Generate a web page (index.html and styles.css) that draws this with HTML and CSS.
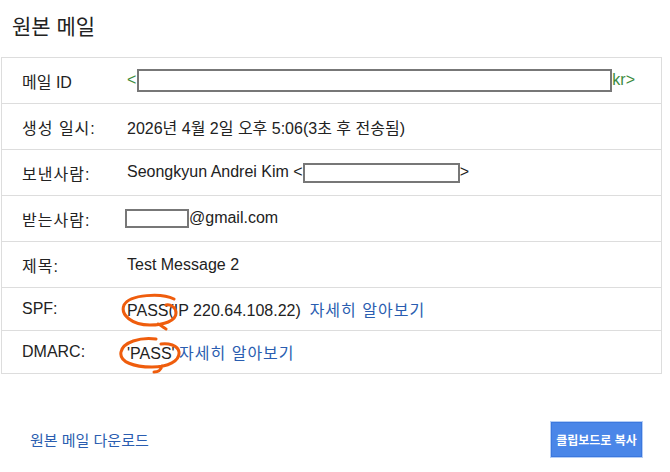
FILE: index.html
```html
<!DOCTYPE html>
<html lang="ko">
<head>
    <meta charset="UTF-8">
    <title>원본 메일</title>
    <link rel="stylesheet" href="styles.css">
</head>
<body>
<h1 class="title">원본 메일</h1>

<table class="info">
    <tr class="tall">
        <td class="label">메일 ID</td>
        <td><span class="green">&lt;</span><span class="box box-id"></span><span class="green">kr&gt;</span></td>
    </tr>
    <tr class="tall">
        <td class="label ko">생성 일시:</td>
        <td>2026년 4월 2일 오후 5:06(3초 후 전송됨)</td>
    </tr>
    <tr class="tall">
        <td class="label ko">보낸사람:</td>
        <td>Seongkyun Andrei Kim &lt;<span class="box box-from"></span>&gt;</td>
    </tr>
    <tr class="tall">
        <td class="label ko">받는사람:</td>
        <td><span class="box box-to"></span>@gmail.com</td>
    </tr>
    <tr class="tall">
        <td class="label ko">제목:</td>
        <td>Test Message 2</td>
    </tr>
    <tr class="short">
        <td class="label">SPF:</td>
        <td class="mark-cell">PASS(IP 220.64.108.22) &nbsp;<a href="#" class="link ko">자세히 알아보기</a>
            <svg class="circle circle-spf" width="60" height="38" viewBox="0 0 60 38">
                <path d="M54 6 C42 0 10 1 4 12 C0 22 12 32 30 32 C44 32 56 28 56 20 C56 14 50 11 46 12 M38 31 C42 33 44 35 46 36" />
            </svg>
        </td>
    </tr>
    <tr class="short">
        <td class="label">DMARC:</td>
        <td class="mark-cell">'PASS' <a href="#" class="link ko">자세히 알아보기</a>
            <svg class="circle circle-dmarc" width="66" height="38" viewBox="0 0 66 38">
                <path d="M38 3 C22 1 5 6 3 16 C1 26 16 31 34 31 C50 31 62 25 61 16 C60 9 50 7 43 8 M44 30 C43 34 40 36 36 36" />
            </svg>
        </td>
    </tr>
</table>

<div class="footer">
    <a href="#" class="link">원본 메일 다운로드</a>
    <button class="copy">클립보드로 복사</button>
</div>
</body>
</html>
```

FILE: styles.css
```css
body {
  margin: 0;
  font-family: "Liberation Sans", Arial, "Noto Sans CJK KR", sans-serif;
  color: #222;
  background: #fff;
}
.title {
  margin: 0;
  padding: 10px 0 0 12px;
  height: 57px;
  box-sizing: border-box;
  font-size: 21px;
  font-weight: normal;
  color: #222;
}
.info {
  margin-left: 1px;
  width: 661px;
  border-collapse: collapse;
  border: 1px solid #ddd;
  font-size: 16px;
}
.info td {
  border-top: 1px solid #ddd;
  padding: 0;
  vertical-align: middle;
  white-space: nowrap;
}
.tall td {
  height: 45px;
}
.short td {
  height: 42px;
}
.label {
  width: 105px;
  padding-left: 20px !important;
}
.ko {
  letter-spacing: 1px;
}
.green {
  color: #3d8b3d;
}
.box {
  display: inline-block;
  border: 2px solid #777;
  box-sizing: border-box;
  vertical-align: middle;
  background: #fff;
}
.box-id {
  width: 475px;
  height: 23px;
  margin-left: 1px;
}
.box-from {
  width: 157px;
  height: 20px;
}
.box-to {
  width: 64px;
  height: 19px;
  margin-left: -2px;
}
.link {
  color: #2a5db0;
  text-decoration: none;
}
.mark-cell {
  position: relative;
}
.circle {
  position: absolute;
  fill: none;
  stroke: #ef5d0d;
  stroke-width: 3;
  stroke-linecap: round;
}
.circle-spf {
  left: -7px;
  top: 5px;
}
.circle-dmarc {
  left: -9px;
  top: 5px;
}
.footer {
  display: flex;
  justify-content: space-between;
  align-items: center;
  padding: 47px 27px 0 30px;
}
.footer .link {
  font-size: 15px;
}
.copy {
  width: 93px;
  height: 37px;
  background: #4a86e8;
  border: 1px solid #b5cdf5;
  box-shadow: inset 0 0 0 1px #3b78de;
  color: #fff;
  font-family: "Noto Sans CJK KR", sans-serif;
  font-size: 12px;
  font-weight: bold;
  padding: 0;
}
```
